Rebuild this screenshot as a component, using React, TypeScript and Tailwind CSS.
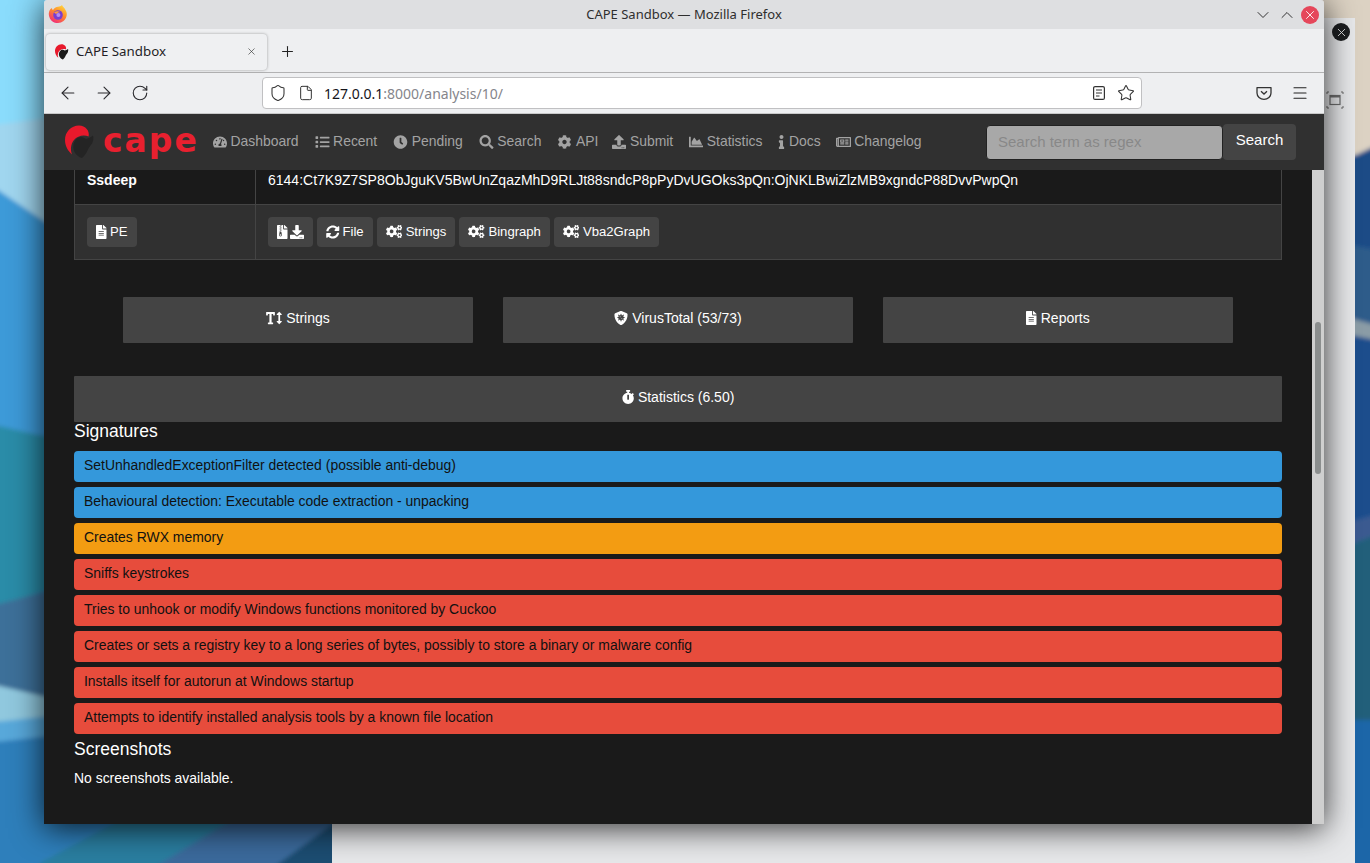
import React from "react";
import { ArrowLeft, ArrowRight, RotateCw, Shield, File, Star, Menu, Plus, X, ChevronDown, ChevronUp } from "lucide-react";
import {
  FaTachometerAlt, FaList, FaClock, FaSearch, FaCog, FaUpload, FaChartArea, FaInfo, FaRegNewspaper,
  FaFileAlt, FaFileArchive, FaDownload, FaSyncAlt, FaCogs, FaTextHeight, FaShieldVirus, FaStopwatch,
} from "react-icons/fa";

const sans = "font-['Liberation_Sans',Arial,sans-serif]";
const ui = "font-['Noto_Sans',sans-serif]";

function Wallpaper() {
  return (
    <svg className="absolute inset-0" width="1370" height="863" viewBox="0 0 1370 863">
      <defs>
        <filter id="soft"><feGaussianBlur stdDeviation="2" /></filter>
      </defs>
      <g filter="url(#soft)">
        <rect x="-5" y="-5" width="1380" height="873" fill="#2f7fbb" />
        <polygon points="-5,-5 345,-5 345,100 -5,130" fill="#8adcfc" />
        <polygon points="-5,125 345,80 345,400 -5,195" fill="#a0d6ef" />
        <polygon points="-5,188 60,232 345,330 345,470 -5,430" fill="#3d9ad8" />
        <polygon points="-5,425 60,440 345,480 345,600 60,585 -5,608" fill="#2a8ca8" />
        <polygon points="-5,605 60,588 345,600 345,720 60,705 -5,688" fill="#3d7099" />
        <polygon points="-5,685 60,700 345,740 60,720 -5,722" fill="#90c8de" />
        <polygon points="-5,722 60,715 345,740 60,735 -5,742" fill="#58a8da" />
        <polygon points="40,863 120,820 345,800 345,870 40,870" fill="#2a7ea0" />
        <polygon points="150,870 240,815 345,820 345,870" fill="#3a6a9c" />
        <polygon points="270,870 345,815 345,870" fill="#1e4e72" />
        <rect x="1320" y="-5" width="55" height="160" fill="#dcd2c3" />
        <polygon points="1350,158 1375,146 1375,250 1350,245" fill="#1c4c86" />
        <polygon points="1350,245 1375,250 1375,325 1350,318" fill="#2d5c8a" />
        <polygon points="1350,318 1375,325 1375,340 1350,335" fill="#8b9ca6" />
        <polygon points="1350,335 1375,340 1375,515 1350,522" fill="#1a4e8c" />
        <polygon points="1350,522 1375,515 1375,535 1350,545" fill="#3a5a90" />
        <polygon points="1350,545 1375,535 1375,720 1350,720" fill="#205f7a" />
        <rect x="1350" y="720" width="25" height="150" fill="#1a66a8" />
      </g>
    </svg>
  );
}

function BackWindow() {
  return (
    <div className="absolute left-[332px] top-[18px] w-[1023px] h-[845px] bg-[#e7e8ea]">
      <div className="absolute left-[1000px] top-[5px] w-[18px] h-[18px] rounded-full bg-[#1c1e20] flex items-center justify-center">
        <X size={13} strokeWidth={1.6} color="#f0f0f0" />
      </div>
      <svg className="absolute left-[994px] top-[73px]" width="18" height="18" viewBox="0 0 18 18" fill="none" stroke="#6d6d6d">
        <rect x="4" y="4.5" width="10" height="9" strokeWidth="1.2" />
        <path d="M4 5.5h10" strokeWidth="2" />
        <path d="M1 3V1h2M15 1h2v2M17 15v2h-2M3 17H1v-2" strokeWidth="1" />
      </svg>
    </div>
  );
}

function FirefoxLogo() {
  return (
    <svg width="20" height="20" viewBox="0 0 20 20">
      <defs>
        <linearGradient id="ffg" x1="0.8" y1="0" x2="0.2" y2="1">
          <stop offset="0" stopColor="#ffd83c" />
          <stop offset="0.45" stopColor="#ff8a2a" />
          <stop offset="1" stopColor="#f0247f" />
        </linearGradient>
      </defs>
      <path d="M14 1c.6 2 2.5 2.6 3.2 4.4 1 1.6 1.6 3 1.6 4.6a9 9 0 1 1-17.4-3.2C2 5.6 3 4.4 4 4c0 1 .4 1.6 1 2 1-2 3-3 5-3.2 1.6-.2 3-.8 4-1.8z" fill="url(#ffg)" />
      <circle cx="10" cy="11" r="4.8" fill="#7a3ed0" />
      <path d="M6 8.4c2-1.4 5-1.4 6.6 0-1-.2-3 0-3.4 1.2C8 9.8 7 9.2 6 8.4z" fill="#ff9a3a" />
      <circle cx="10.4" cy="11" r="2" fill="#b48cf0" />
    </svg>
  );
}

function Mark({ bird = "#242424" }: { bird?: string }) {
  return (
    <svg className="w-full h-full" viewBox="0 0 30 34">
      <path d="M14 0.5C6 0.5 0 7 0 15c0 6 3 11 7 14.5-1.8-5-1.2-10.5 2-14.5 3.4-4.2 9.5-5.6 14.6-3.6C25 6 20.5 0.5 14 0.5z" fill="#e8192c" />
      <path d="M8.5 24c-.8-5 1-9.5 5-11.5 3-1.4 5.5 0 7.5 1.5 2-.3 4.5-1.5 7-3.5.7 2.5.4 5.5-1 8-1.2 2-2.5 3-3.5 5-1.5 3.5-3.5 7-6.5 9.5-3.5-1-7.5-4-8.5-9z" fill={bird} />
    </svg>
  );
}

function TitleBar() {
  return (
    <div className={`relative h-[29px] shrink-0 bg-[#dedfe1] flex items-center justify-center ${ui} text-[13px] text-[#2e2e2e]`}>
      <span className="absolute left-[4px] top-[4px]"><FirefoxLogo /></span>
      <span>CAPE Sandbox — Mozilla Firefox</span>
      <div className="absolute right-[5px] top-[5px] flex items-center gap-[4px]">
        <ChevronDown size={20} strokeWidth={1.2} color="#333" />
        <ChevronUp size={20} strokeWidth={1.2} color="#333" />
        <span className="w-[18px] h-[18px] rounded-full bg-[#e5475b] flex items-center justify-center">
          <X size={14} strokeWidth={1.5} color="#fff" />
        </span>
      </div>
    </div>
  );
}

function TabBar() {
  return (
    <div className="h-[44px] shrink-0 bg-[#eeeff1] border-b border-[#b2b2b3] flex items-center pl-[2px] pt-[2px]">
      <div className={`w-[221px] h-[36px] rounded-[4px] bg-[#eff0f2] shadow-[0_0_3px_rgba(0,0,0,0.35)] flex items-center pl-[9px] pr-[10px] ${ui} text-[13.3px] text-[#1f1e26]`}>
        <span className="w-[14px] h-[16px] mr-[7px]"><Mark bird="#1a1a1a" /></span>
        <span className="flex-1">CAPE Sandbox</span>
        <X size={11} strokeWidth={1.4} color="#333" />
      </div>
      <Plus size={17} strokeWidth={1.5} color="#222" className="ml-[12px]" />
    </div>
  );
}

function NavBar() {
  return (
    <div className="h-[41px] shrink-0 bg-[#eeeff1] border-b border-[#c8c8c9] flex items-center relative">
      <div className="flex items-center gap-[16px] pl-[14px] w-[218px]">
        <ArrowLeft size={20} strokeWidth={1.3} color="#2a2a2e" />
        <ArrowRight size={20} strokeWidth={1.3} color="#2a2a2e" />
        <RotateCw size={18} strokeWidth={1.5} color="#2a2a2e" className="ml-[1px]" />
      </div>
      <div className={`w-[880px] h-[32px] bg-white border border-[#c0c0c2] rounded-[4px] flex items-center pl-[6px] pr-[6px] ${ui} text-[14px]`}>
        <Shield size={18} strokeWidth={1.4} color="#333" />
        <File size={16} strokeWidth={1.5} color="#333" className="ml-[11px]" />
        <span className="ml-[10px] text-[#15141a]">127.0.0.1<span className="text-[#85858b]">:8000/analysis/10/</span></span>
        <svg className="ml-auto" width="16" height="16" viewBox="0 0 16 16" fill="none" stroke="#333" strokeWidth="1.2">
          <rect x="2.6" y="1.6" width="10.8" height="12.8" rx="1.5" />
          <path d="M5 5h6M5 8h6M5 11h3.5" />
        </svg>
        <Star size={18} strokeWidth={1.4} color="#333" className="ml-[10px]" />
      </div>
      <div className="flex items-center gap-[18px] ml-[113px]">
        <svg width="18" height="18" viewBox="0 0 18 18" fill="none" stroke="#333" strokeWidth="1.3">
          <path d="M2 3.6h14v5.4a7 6.4 0 0 1-14 0z" strokeLinejoin="round" />
          <path d="M6 7.2l3 2.8 3-2.8" />
        </svg>
        <Menu size={18} strokeWidth={1.5} color="#222" />
      </div>
    </div>
  );
}

const links: [React.ComponentType<{ className?: string }>, string, string, string][] = [
  [FaTachometerAlt, "Dashboard", "w-[14px]", ""],
  [FaList, "Recent", "w-[15px]", ""],
  [FaClock, "Pending", "w-[15px]", ""],
  [FaSearch, "Search", "w-[15px]", ""],
  [FaCog, "API", "w-[15px]", "-mr-[2px]"],
  [FaUpload, "Submit", "w-[14px]", ""],
  [FaChartArea, "Statistics", "w-[14px]", ""],
  [FaInfo, "Docs", "w-[7px]", "-mr-[1px]"],
  [FaRegNewspaper, "Changelog", "w-[15px]", ""],
];

function SiteNav() {
  return (
    <div className={`h-[56px] shrink-0 bg-[#303030] flex items-center pl-[21px] pr-[28px] ${sans}`}>
      <span className="w-[30px] h-[34px] shrink-0"><Mark /></span>
      <span className="ml-[8px] w-[94px] text-center text-[#e8202f] font-['DejaVu_Sans',sans-serif] font-bold text-[33px] leading-[34px] tracking-[2px] -translate-y-[1px] whitespace-nowrap">cape</span>
      <nav className="ml-[16px] flex items-center gap-[16px] text-[13.93px] text-[#a3a3a3]">
        {links.map(([I, t, w, m]) => (
          <a key={t} className={`flex items-center gap-[3.5px] ${m}`}>
            <I className={`h-[14px] shrink-0 ${w}`} />
            <span className="pb-[2px]">{t}</span>
          </a>
        ))}
      </nav>
      <div className="ml-auto flex items-center">
        <input
          readOnly
          placeholder="Search term as regex"
          className="w-[237px] h-[35px] rounded-[4px] bg-[#a8a8a8] border border-[#222] px-[11px] pb-[2px] text-[15px] placeholder:text-[#888888] outline-none"
        />
        <div className="w-[73px] h-[36px] rounded-[4px] bg-[#444444] text-white text-[15px] flex items-center justify-center pb-[3px]">Search</div>
      </div>
    </div>
  );
}

function SmallBtn({ children, gap = "gap-[3.5px]" }: { children: React.ReactNode; gap?: string }) {
  return (
    <span className={`h-[30px] px-[9px] rounded-[4px] bg-[#444444] text-white text-[13.125px] flex items-center pb-[1px] ${gap}`}>{children}</span>
  );
}

function BigBtn({ icon, label, className = "" }: { icon: React.ReactNode; label: string; className?: string }) {
  return (
    <div className={`h-[46px] bg-[#444444] rounded-[1px] text-white text-[14px] flex items-center justify-center gap-[4px] pb-[4px] ${className}`}>
      {icon}
      {label}
    </div>
  );
}

const signatures: [string, string][] = [
  ["bg-[#3498db]", "SetUnhandledExceptionFilter detected (possible anti-debug)"],
  ["bg-[#3498db]", "Behavioural detection: Executable code extraction - unpacking"],
  ["bg-[#f39c12]", "Creates RWX memory"],
  ["bg-[#e74c3c]", "Sniffs keystrokes"],
  ["bg-[#e74c3c]", "Tries to unhook or modify Windows functions monitored by Cuckoo"],
  ["bg-[#e74c3c]", "Creates or sets a registry key to a long series of bytes, possibly to store a binary or malware config"],
  ["bg-[#e74c3c]", "Installs itself for autorun at Windows startup"],
  ["bg-[#e74c3c]", "Attempts to identify installed analysis tools by a known file location"],
];

function Page() {
  return (
    <div className={`flex-1 min-w-0 bg-[#1a1a1a] text-white text-[14px] px-[30px] ${sans}`}>
      <div className="border-x border-b border-[#444444] grid grid-cols-[181px_1fr]">
        <div className="h-[35px] bg-[#1a1a1a] border-r border-b border-[#444444] pl-[12px] font-bold flex items-center pb-[14px]">Ssdeep</div>
        <div className="h-[35px] border-b border-[#444444] pl-[12px] flex items-center pb-[14px]">
          6144:Ct7K9Z7SP8ObJguKV5BwUnZqazMhD9RLJt88sndcP8pPyDvUGOks3pQn:OjNKLBwiZlzMB9xgndcP88DvvPwpQn
        </div>
        <div className="h-[54px] bg-[#303030] border-r border-[#444444] pl-[12px] flex items-center">
          <SmallBtn><FaFileAlt className="h-[14px] w-[10.5px]" />PE</SmallBtn>
        </div>
        <div className="h-[54px] bg-[#303030] pl-[12px] flex items-center gap-[4px]">
          <SmallBtn gap="gap-[2.5px]"><FaFileArchive className="h-[14px] w-[10.5px]" /><FaDownload className="h-[14px] w-[14px]" /></SmallBtn>
          <SmallBtn gap="gap-[3px]"><FaSyncAlt className="h-[14px] w-[13.5px]" />File</SmallBtn>
          <SmallBtn><FaCogs className="h-[13px] w-[16.5px]" />Strings</SmallBtn>
          <SmallBtn><FaCogs className="h-[13px] w-[16.5px]" />Bingraph</SmallBtn>
          <SmallBtn><FaCogs className="h-[13px] w-[16.5px]" />Vba2Graph</SmallBtn>
        </div>
      </div>

      <div className="mt-[37px] flex justify-center gap-[30px]">
        <BigBtn className="w-[350px]" icon={<FaTextHeight className="h-[14px] w-[16px]" />} label="Strings" />
        <BigBtn className="w-[350px]" icon={<FaShieldVirus className="h-[14px] w-[14px]" />} label="VirusTotal (53/73)" />
        <BigBtn className="w-[350px]" icon={<FaFileAlt className="h-[14px] w-[10.5px]" />} label="Reports" />
      </div>

      <BigBtn className="mt-[33px]" icon={<FaStopwatch className="h-[14px] w-[12.25px]" />} label="Statistics (6.50)" />

      <h5 className="text-[17.5px] leading-[21px] mt-[-1px]">Signatures</h5>
      <div className="mt-[9px] flex flex-col gap-[5px]">
        {signatures.map(([bg, t], i) => (
          <div key={i} className={`h-[31px] rounded-[4px] ${bg} text-[#111] text-[13.95px] px-[10px] pb-[2px] flex items-center`}>{t}</div>
        ))}
      </div>
      <h5 className="text-[17.5px] leading-[21px] mt-[5px]">Screenshots</h5>
      <p className="mt-[8px] leading-[21px] text-[13.93px]">No screenshots available.</p>
    </div>
  );
}

export default function App() {
  return (
    <div className="relative w-[1370px] h-[863px] overflow-hidden">
      <Wallpaper />
      <BackWindow />
      <div className="absolute left-[44px] top-0 w-[1280px] h-[824px] flex flex-col overflow-hidden shadow-[0_4px_32px_rgba(0,0,0,0.8)] rounded-t-[3px]">
        <TitleBar />
        <TabBar />
        <NavBar />
        <SiteNav />
        <div className="flex flex-1 min-h-0">
          <Page />
          <div className="w-[12px] shrink-0 bg-[#cfcfcf]" />
        </div>
        <div className="absolute right-[3px] top-[322px] w-[6px] h-[152px] rounded-full bg-[#8b8e8e]" />
      </div>
    </div>
  );
}
